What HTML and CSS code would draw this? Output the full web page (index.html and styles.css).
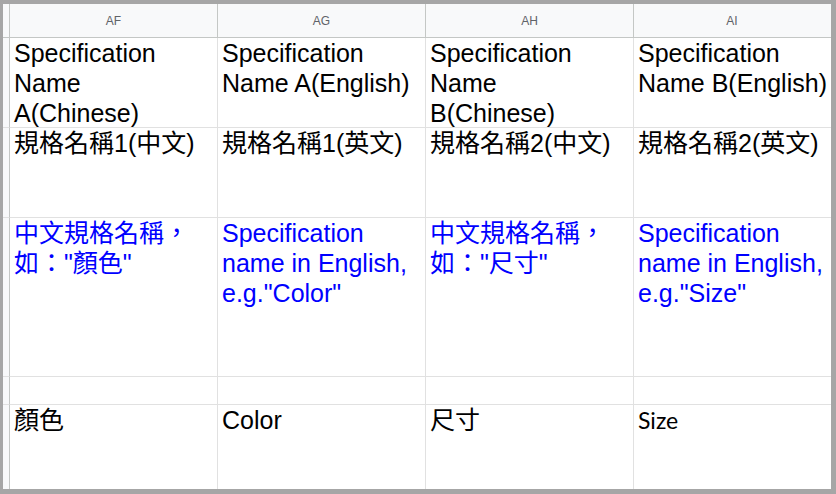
FILE: index.html
```html
<!DOCTYPE html>
<html>
<head>
<meta charset="utf-8">
<link rel="stylesheet" href="styles.css">
</head>
<body>
<div class="frame">
  <div class="sheet">
    <div class="corner hdr"></div>
    <div class="colhdr">AF</div>
    <div class="colhdr">AG</div>
    <div class="colhdr">AH</div>
    <div class="colhdr last">AI</div>

    <div class="rowhdr r1"></div>
    <div class="cell r1">Specification Name A(Chinese)</div>
    <div class="cell r1">Specification Name A(English)</div>
    <div class="cell r1">Specification Name B(Chinese)</div>
    <div class="cell r1 last">Specification Name B(English)</div>

    <div class="rowhdr r2"></div>
    <div class="cell cjk r2">規格名稱1(中文)</div>
    <div class="cell cjk r2">規格名稱1(英文)</div>
    <div class="cell cjk r2">規格名稱2(中文)</div>
    <div class="cell cjk r2 last">規格名稱2(英文)</div>

    <div class="rowhdr r3"></div>
    <div class="cell cjk blue r3">中文規格名稱，如："顏色"</div>
    <div class="cell blue r3">Specification name in English, e.g."Color"</div>
    <div class="cell cjk blue r3">中文規格名稱，如："尺寸"</div>
    <div class="cell blue r3 last">Specification name in English, e.g."Size"</div>

    <div class="rowhdr r4"></div>
    <div class="cell r4"></div>
    <div class="cell r4"></div>
    <div class="cell r4"></div>
    <div class="cell r4 last"></div>

    <div class="rowhdr r5"></div>
    <div class="cell cjk r5">顏色</div>
    <div class="cell r5">Color</div>
    <div class="cell cjk r5">尺寸</div>
    <div class="cell size r5 last">Size</div>
  </div>
</div>
</body>
</html>
```

FILE: styles.css
```css
html, body {
  margin: 0;
  padding: 0;
  background: #a6a6a6;
}
.frame {
  width: 836px;
  height: 494px;
  box-sizing: border-box;
  border-top: 4px solid #a6a6a6;
  border-left: 3px solid #a6a6a6;
  border-right: 5px solid #a6a6a6;
  border-bottom: 5px solid #a6a6a6;
  background: #ffffff;
  overflow: hidden;
}
.sheet {
  display: grid;
  grid-template-columns: 7px 208px 208px 208px 208px;
  grid-template-rows: 34px 90px 90px 159px 28px 1fr;
  width: 839px;
  height: 100%;
  font-family: "Liberation Sans", Arial, "Noto Sans CJK TC", sans-serif;
}
.corner, .colhdr {
  background: #f8f9fa;
  border-bottom: 1px solid #c4c7c5;
  border-right: 1px solid #c4c7c5;
  box-sizing: border-box;
}
.colhdr {
  display: flex;
  align-items: center;
  justify-content: center;
  font-size: 12px;
  color: #5f6368;
  padding-top: 1px;
}
.colhdr.last { padding-right: 11px; }
.rowhdr {
  background: #f8f9fa;
  border-right: 1px solid #c4c7c5;
  border-bottom: 1px solid #e1e1e1;
  box-sizing: border-box;
}
.rowhdr.r5 { border-bottom: none; }
.cell {
  box-sizing: border-box;
  border-right: 1px solid #e1e1e1;
  border-bottom: 1px solid #e1e1e1;
  padding: 0 8px 0 4px;
  font-size: 25px;
  line-height: 30px;
  color: #000000;
  overflow: hidden;
}
.cell.r5 { border-bottom: none; }
.cjk {
  font-family: "Liberation Sans", Arial, "Noto Sans CJK TC", sans-serif;
}
.blue { color: #0000ff; }
.size {
  font-family: Lato, "Open Sans", sans-serif;
  font-size: 23px;
}
```
